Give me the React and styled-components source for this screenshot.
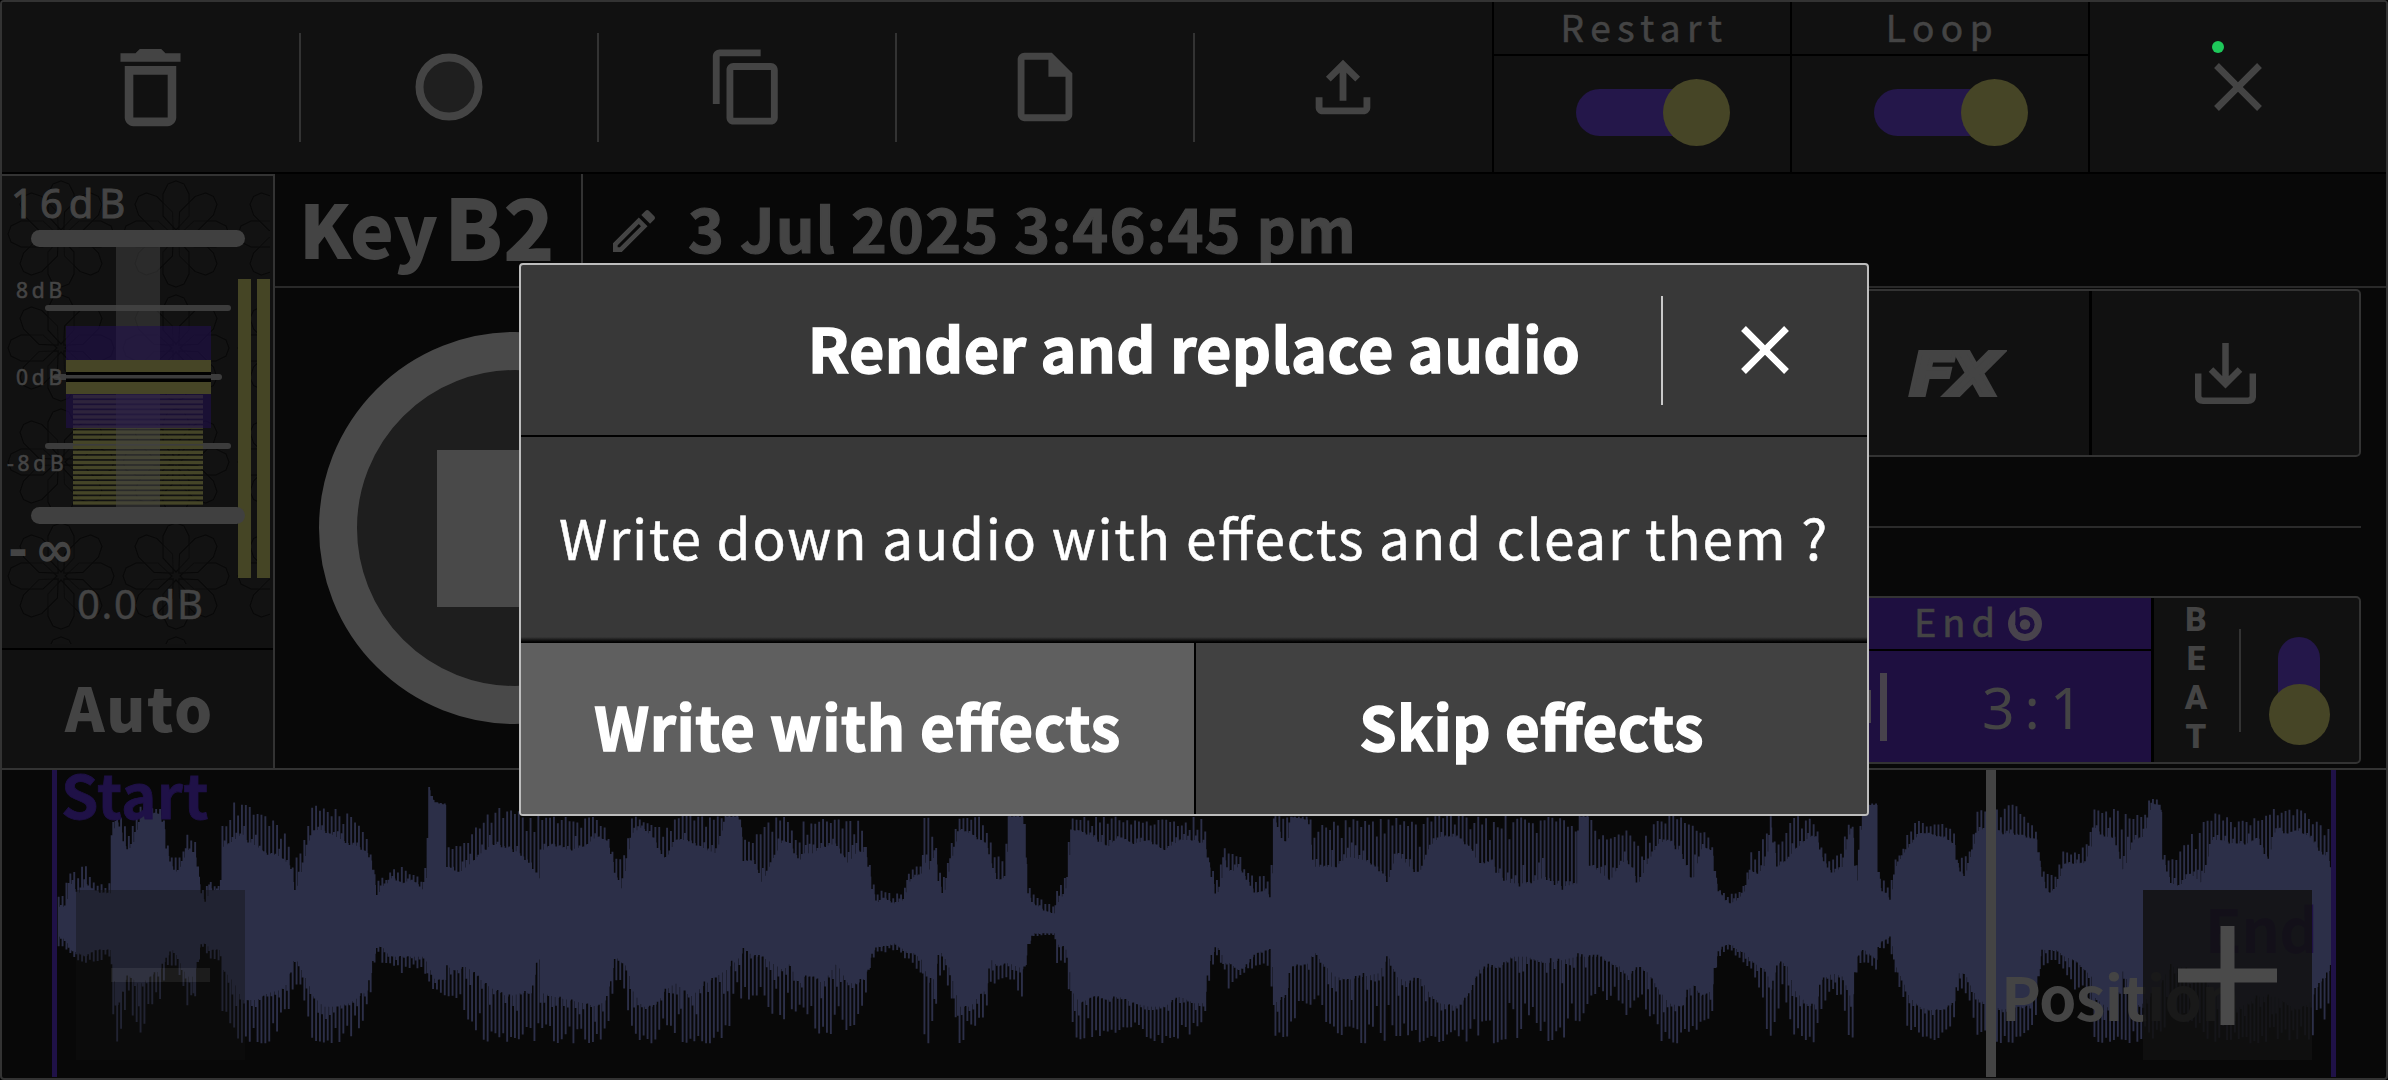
import React from "react";
import styled, { createGlobalStyle } from "styled-components";

const sans = `"Noto Sans CJK SC", "Noto Sans", sans-serif`;
const digits = `"Noto Sans", "Open Sans", sans-serif`;

const c = {
  bg: "#080808",
  panel: "#111111",
  line: "#333333",
  grey: "#444444",
  olive: "#464526",
  violet: "#24174a",
  deep: "#1e0f40",
  wave: "#2c2f48",
};

const GlobalStyle = createGlobalStyle`
  *, *::before, *::after { box-sizing: border-box; }
  body { margin: 0; background: #000; overflow: hidden; }
`;

const Frame = styled.div`
  position: relative;
  display: grid;
  grid-template-rows: 172px 596px 308px;
  width: 2388px;
  height: 1080px;
  border: 2px solid ${c.line};
  border-radius: 4px;
  background: ${c.bg};
  color: ${c.grey};
  font-family: ${sans};
  overflow: hidden;
`;

const Label = styled.span`
  font-family: ${(p) => (p.$digits ? digits : sans)};
  font-size: ${(p) => p.$size}px;
  font-weight: ${(p) => p.$weight || 400};
  letter-spacing: ${(p) => p.$track || 0}px;
  line-height: 1;
  padding-top: ${(p) => p.$drop || 0}px;
  padding-bottom: ${(p) => (p.$digits ? 0.06 : 0.14)}em;
  white-space: nowrap;
  font-feature-settings: "liga" 1;
  -webkit-text-stroke: ${(p) => p.$fat || 0}px currentColor;
`;

/* toolbar */
const Toolbar = styled.header`
  display: flex;
  background: ${c.panel};
  border-bottom: 2px solid #000;
`;

const Tool = styled.button`
  display: flex;
  align-items: center;
  justify-content: center;
  width: 298px;
  padding: 0 ${(p) => p.$inset || 0}px 0 0;
  border: 0;
  background: none;
  color: ${c.grey};
  position: relative;
  ${(p) =>
    p.$divider &&
    `&::after { content: ""; position: absolute; right: -1px; top: 31px; width: 2px; height: 109px; background: ${c.line}; }`}
  ${(p) => p.$edge && `border-left: 2px solid #000;`}
`;

const SwitchCell = styled.div`
  display: grid;
  grid-template-rows: 54px 1fr;
  width: 298px;
  border-left: 2px solid #000;
`;

const SwitchTitle = styled.div`
  display: flex;
  align-items: center;
  justify-content: center;
  padding: 2px 0 0 5px;
  border-bottom: 2px solid #000;
`;

const SwitchBody = styled.div`
  display: flex;
  align-items: center;
  justify-content: center;
  padding: 0 0 3px 22px;
`;

const Track = styled.div`
  display: flex;
  align-items: center;
  justify-content: flex-end;
  width: 154px;
  height: 67px;
  &::before {
    content: "";
    flex: 1;
    height: 47px;
    margin-right: -34px;
    border-radius: 24px 0 0 24px;
    background: ${c.violet};
  }
`;

const Knob = styled.div`
  position: relative;
  width: ${(p) => p.$d}px;
  height: ${(p) => p.$d}px;
  border-radius: 50%;
  background: ${c.olive};
`;

const StatusDot = styled.i`
  position: absolute;
  left: 122px;
  top: 39px;
  width: 12px;
  height: 12px;
  border-radius: 50%;
  background: #1ec85a;
`;

/* middle */
const Middle = styled.main`
  display: grid;
  grid-template-columns: 273px 1fr;
  border-bottom: 2px solid ${c.line};
`;

const Channel = styled.section`
  display: grid;
  grid-template-rows: 474px 1fr;
  border-top: 2px solid ${c.line};
  border-right: 2px solid ${c.line};
  background: ${c.panel};
`;

const Fader = styled.div`
  position: relative;
  border-bottom: 2px solid #000;
`;

const FaderArt = styled.svg`
  display: block;
`;

const Mark = styled(Label)`
  position: absolute;
  left: ${(p) => p.$x}px;
  top: ${(p) => p.$y}px;
`;

const Floor = styled(Mark)`
  font-family: "DejaVu Sans", sans-serif;
  word-spacing: -10px;
`;

const AutoButton = styled.button`
  display: flex;
  align-items: center;
  justify-content: center;
  border: 0;
  padding: 3px 0 0 4px;
  background: ${c.panel};
  color: ${c.grey};
`;

const Deck = styled.section`
  display: grid;
  grid-template-rows: 114px 1fr;
`;

const TitleBar = styled.div`
  display: flex;
  border-bottom: 2px solid #292929;
`;

const KeyName = styled.div`
  display: flex;
  align-items: flex-start;
  width: 308px;
  padding: 7px 0 0 24px;
  gap: 6px;
  border-right: 2px solid ${c.line};
`;

const DateName = styled.div`
  display: flex;
  align-items: center;
  gap: 26px;
  padding: 1px 0 0 23px;
`;

const DeckBody = styled.div`
  display: grid;
  grid-template-columns: 480px 1606px;
`;

const StopArea = styled.div`
  display: flex;
  align-items: center;
  justify-content: center;
`;

const StopButton = styled.button`
  display: flex;
  align-items: center;
  justify-content: center;
  width: 392px;
  height: 392px;
  padding: 0;
  border: 38px solid #494949;
  border-radius: 50%;
  background: #1e1e1e;
  &::before {
    content: "";
    width: 157px;
    height: 157px;
    background: #494949;
  }
`;

const Controls = styled.div`
  display: flex;
  flex-direction: column;
  justify-content: space-between;
  padding: 1px 0 4px;
`;

const Panel = styled.div`
  display: flex;
  height: 168px;
  border: 2px solid ${c.line};
  border-radius: 5px;
  background: ${c.panel};
  overflow: hidden;
`;

const Rule = styled.hr`
  width: 100%;
  height: 2px;
  margin: 0;
  border: 0;
  background: #2b2b2b;
`;

const Pad = styled.div`
  flex: ${(p) => (p.$wide ? "1" : "0 0 267px")};
  display: flex;
  align-items: center;
  justify-content: center;
  border-right: ${(p) => (p.$last ? 0 : 3)}px solid #000;
`;

const FxMark = styled.span`
  font: italic 700 58px/1 "DejaVu Sans", sans-serif;
  letter-spacing: -6px;
  -webkit-text-stroke: 4px currentColor;
  transform: scaleX(1.16);
  padding: 4px 9px 0 0;
`;

const Spacer = styled.div`
  flex: 1;
  background: ${c.deep};
`;

const EndField = styled.div`
  display: grid;
  grid-template-rows: 53px 1fr;
  width: 344px;
  background: ${c.deep};
`;

const EndTitle = styled.div`
  display: flex;
  align-items: center;
  justify-content: center;
  gap: 7px;
  padding-right: 2px;
  border-bottom: 2px solid #000;
`;

const EndValue = styled.div`
  display: flex;
  align-items: center;
  padding: 0 0 0 61px;
`;

const Stick = styled.i`
  width: ${(p) => p.$w}px;
  height: ${(p) => p.$h}px;
  margin-right: ${(p) => p.$gap}px;
  background: #48434c;
`;

const BeatCell = styled.div`
  display: grid;
  grid-template-columns: 85px 2px 1fr;
  align-items: center;
  width: 208px;
  border-left: 3px solid #000;
`;

const BeatWord = styled.div`
  display: flex;
  flex-direction: column;
  align-items: center;
  padding: 0 1px 4px 0;
  font: 900 33px/39px Roboto, sans-serif;
`;

const BeatRule = styled.i`
  height: 103px;
  background: ${c.line};
`;

const BeatSwitch = styled.div`
  display: flex;
  flex-direction: column;
  align-items: center;
  padding: 22px 2px 0 0;
  &::before {
    content: "";
    width: 42px;
    height: 76px;
    margin-bottom: -29px;
    border-radius: 21px 21px 0 0;
    background: ${c.violet};
  }
`;

/* waveform */
const WaveArea = styled.section`
  position: relative;
`;

const WaveArt = styled.svg`
  display: block;
`;

const Marker = styled.i`
  position: absolute;
  top: 0;
  bottom: 1px;
  left: ${(p) => p.$x}px;
  width: ${(p) => p.$w}px;
  background: ${(p) => p.$color};
`;

const MarkerName = styled(Label)`
  position: absolute;
  left: ${(p) => p.$x}px;
  top: ${(p) => p.$y}px;
  color: ${(p) => p.$color};
`;

const ZoomButton = styled.button`
  position: absolute;
  top: 120px;
  left: ${(p) => p.$x}px;
  width: 169px;
  height: 170px;
  padding: 0;
  border: 0;
  display: flex;
  align-items: center;
  justify-content: center;
  background: rgba(17, 17, 17, ${(p) => p.$alpha});
`;

/* dialog */
const Dialog = styled.div`
  position: absolute;
  left: 517px;
  top: 261px;
  width: 1350px;
  height: 553px;
  display: grid;
  grid-template-rows: 172px 206px 1fr;
  border: 2px solid #bdbdbd;
  border-radius: 4px;
  background: #383838;
  color: #fff;
  overflow: hidden;
`;

const DialogHead = styled.div`
  display: grid;
  grid-template-columns: 206px 1fr 206px;
  align-items: center;
  border-bottom: 2px solid #000;
`;

const DialogTitle = styled.div`
  grid-column: 2;
  display: flex;
  justify-content: center;
  padding-top: 2px;
`;

const DialogClose = styled.button`
  display: flex;
  align-items: center;
  justify-content: center;
  height: 109px;
  padding: 0;
  border: 0;
  border-left: 2px solid #c9c9c9;
  background: none;
  color: #fff;
`;

const DialogText = styled.div`
  display: flex;
  align-items: center;
  justify-content: center;
  background: linear-gradient(#383838 0 200px, #000 205px);
`;

const DialogActions = styled.div`
  display: grid;
  grid-template-columns: 1fr 1fr;
`;

const Action = styled.button`
  display: flex;
  align-items: center;
  justify-content: center;
  padding: 1px 0 0;
  border: 0;
  border-left: ${(p) => (p.$primary ? 0 : 2)}px solid #000;
  background: ${(p) => (p.$primary ? "#5f5f5f" : "#414141")};
  color: #fff;
`;

const Icon = ({ d, size = 82 }) => (
  <svg width={size} height={size} viewBox="0 0 24 24" fill="currentColor">
    <path d={d} />
  </svg>
);

const icons = {
  trash: "M6 19c0 1.1.9 2 2 2h8c1.1 0 2-.9 2-2V7H6v12zM8 9h8v10H8V9zm7.5-5l-1-1h-5l-1 1H5v2h14V4h-3.5z",
  copy: "M16 1H4c-1.1 0-2 .9-2 2v14h2V3h12V1zm3 4H8c-1.1 0-2 .9-2 2v14c0 1.1.9 2 2 2h11c1.1 0 2-.9 2-2V7c0-1.1-.9-2-2-2zm0 16H8V7h11v14z",
  file: "M14 2H6c-1.1 0-2 .9-2 2v16c0 1.1.9 2 2 2h12c1.1 0 2-.9 2-2V8l-6-6zM6 20V4h7v5h5v11H6z",
  upload: "M18 15v3H6v-3H4v3c0 1.1.9 2 2 2h12c1.1 0 2-.9 2-2v-3h-2zM7 9l1.41 1.41L11 7.83V16h2V7.83l2.59 2.58L17 9l-5-5-5 5z",
  close: "M19 6.41L17.59 5 12 10.59 6.41 5 5 6.41 10.59 12 5 17.59 6.41 19 12 13.41 17.59 19 19 17.59 13.41 12z",
  pencil: "M14.06 9.02l.92.92L5.92 19H5v-.92l9.06-9.06M17.66 3c-.25 0-.51.1-.7.29l-1.83 1.83 3.75 3.75 1.83-1.83c.39-.39.39-1.02 0-1.41l-2.34-2.34c-.2-.2-.45-.29-.71-.29zm-3.6 3.19L3 17.25V21h3.75L17.81 9.94l-3.75-3.75z",
};

/* Envelope samples per segment: x, outer top, inner top, inner bottom, outer bottom */
const segments = [
  [0, `113,440,470,560,590 125,420,470,570,600 135,350,400,600,610 150,360,430,610,630 165,340,400,620,640 180,390,420,600,640 200,400,430,600,630 214,400,430,600,620 217,240,250,640,780 225,170,210,780,880 232,190,230,740,870 245,235,300,680,770 255,220,290,680,780 262,210,260,700,830 275,150,190,700,870 290,180,190,680,770 310,160,190,660,760 318,180,220,640,700 325,270,310,620,660 335,300,350,600,650 345,330,370,620,650 355,310,330,660,700 365,250,300,680,780 378,250,310,680,800 384,310,340,620,700 390,410,430,580,600 400,420,460,580,590 408,390,410,600,640 415,400,420,600,620 430,410,420,600,650 434,200,290,660,830 445,240,280,680,780 455,150,270,700,880 470,160,250,750,880 480,165,270,750,880 500,180,290,750,880 520,200,310,730,880 545,220,320,720,860 560,250,340,700,800 567,320,350,650,760 575,320,430,620,700 590,290,350,670,730 600,240,280,700,780 610,170,240,740,880 630,160,240,770,880 655,175,260,770,880 680,190,280,760,870 700,210,290,740,840 718,270,310,720,790 727,320,340,650,710 735,400,440,590,600 745,380,410,590,650 755,390,400,610,640 765,360,380,620,640 785,350,400,620,670 800,370,390,620,660 815,370,400,620,660 825,390,420,620,650 834,340,370,640,710 839,110,120,660,700 848,155,155,690,720 870,160,165,690,740 874,270,350,650,740 885,280,350,660,740 895,290,370,660,750 910,270,350,650,790 925,230,330,670,840 945,200,300,700,870 965,165,280,720,880 990,180,290,740,880 1015,180,310,730,880 1040,190,340,730,880 1052,190,400,610,880 1060,195,300,730,880 1080,200,280,740,880 1110,200,300,750,880 1140,200,290,760,880 1165,200,260,770,880 1185,230,270,750,860 1195,290,310,680,780 1203,320,370,620,690 1215,320,420,640,700 1225,290,330,650,750 1235,200,250,720,840 1255,195,230,770,880 1280,210,270,770,880 1300,240,330,720,840 1320,200,270,700,880 1350,190,270,740,880 1380,200,300,700,880 1400,200,310,680,880 1420,190,200,660,870 1447,195,200,620,780 1455,260,330,600,760 1475,260,330,620,740 1490,240,400,620,750 1510,200,330,640,790 1530,190,270,660,810 1545,220,280,640,820 1555,260,310,690,790 1566,250,330,700,770`],
  [800, `0,200,310,680,780 20,200,310,680,820 40,200,290,700,860 68,200,280,640,860 90,200,340,700,850 110,200,300,700,820 125,240,310,680,780 131,300,340,640,720 138,370,410,610,650 148,430,460,590,610 160,420,440,590,610 180,430,460,580,600 200,430,450,600,620 208,370,400,610,630 220,350,380,610,640 235,340,370,630,680 239,195,330,650,880 250,200,360,700,880 262,240,300,680,860 268,350,390,600,700 278,390,435,620,650 290,310,350,660,720 300,250,290,720,800 310,200,240,770,880 330,200,250,770,860 350,200,270,730,820 362,240,280,720,790 372,270,340,630,700 385,310,390,650,710 400,340,380,640,700 406,195,200,640,680 437,195,200,660,750 443,400,430,590,600 455,430,460,550,560 475,450,480,550,555 495,470,490,550,555 503,410,450,590,660 515,400,430,590,640 522,320,380,620,660 528,195,240,720,850 545,200,240,760,880 570,200,260,740,870 600,200,290,750,850 620,200,260,740,860 650,205,280,760,830 680,215,270,770,870 710,205,300,770,880 740,210,270,740,870 770,200,270,760,850 790,205,280,760,810 798,320,340,640,720 812,380,430,590,620 820,370,420,600,640 828,290,320,640,660 840,300,370,640,740 855,290,350,660,680 870,360,380,650,670 890,380,430,610,650 910,370,420,600,640 921,400,450,600,660 925,195,200,760,880 950,200,290,740,880 960,200,200,650,820 995,200,210,640,760 1002,210,350,600,770 1020,215,350,640,800 1045,215,350,680,850 1070,210,320,690,880 1100,205,330,680,880 1130,210,350,670,880 1150,200,390,620,880 1165,200,310,680,880 1190,205,350,700,860 1210,210,370,680,880 1230,200,290,730,870 1250,195,260,760,880 1285,195,260,770,860 1310,200,290,730,880 1325,200,340,660,880 1350,195,330,650,880 1370,200,380,650,880 1390,195,400,620,880 1420,200,400,620,860 1440,205,390,630,840 1460,200,380,640,880 1490,200,410,630,860 1520,195,400,620,880 1524,195,200,620,830 1543,195,200,620,770`],
  [1588, `0,200,340,620,750 20,230,370,620,750 40,240,390,640,750 60,250,340,650,760 75,240,330,680,800 95,290,400,650,740 115,250,330,670,800 135,200,280,720,870 155,195,270,760,880 180,195,310,770,880 200,200,400,700,880 220,220,290,740,840 240,270,300,720,810 250,390,410,610,640 262,420,450,590,610 275,430,460,580,600 290,430,450,600,620 305,400,420,610,640 315,300,360,630,660 330,320,370,650,700 345,240,340,660,830 356,195,230,720,890 368,290,350,640,780 385,250,330,640,760 400,200,300,720,860 430,195,260,770,880 445,220,260,760,880 455,290,320,690,780 475,320,370,670,730 495,310,350,680,740 505,230,270,720,820 515,195,230,760,915 524,350,400,620,680 534,195,200,600,640 538,160,165,600,640 563,160,165,630,660 568,380,410,580,600 590,400,450,560,590 600,330,350,650,680 615,300,310,700,740 625,240,290,740,840 645,210,250,770,870 665,210,250,780,880 690,220,260,780,860 715,240,280,760,820 722,330,350,670,730 735,320,380,670,730 750,280,300,720,780 762,170,240,750,880 790,170,230,770,880 810,170,250,780,880 835,160,250,770,880 860,200,260,770,860 878,250,270,700,790 885,350,370,600,650 900,370,430,600,640 915,380,410,600,630 930,300,340,620,660 950,310,340,630,720 970,290,340,660,740 983,240,290,680,820 988,160,230,740,880 1010,160,260,770,880 1030,165,260,780,880 1046,180,370,650,880 1065,190,270,770,880 1085,200,260,760,880 1093,190,220,740,870 1100,125,160,740,870 1120,160,165,700,870 1125,310,330,680,860 1140,330,400,650,830 1155,300,410,650,800 1175,260,370,660,820 1200,220,400,680,860 1220,200,270,720,880 1240,170,270,760,880 1260,210,280,780,880 1290,210,280,760,880 1310,200,260,740,880 1330,190,330,740,880 1345,170,230,740,870 1365,180,250,760,880 1385,165,240,780,880 1410,190,260,760,870 1430,220,300,700,840 1445,240,320,680,830 1455,210,350,640,820`],
];

const samples = segments.flatMap(([x0, text]) =>
  text.split(" ").map((s) => {
    const [x, ...ys] = s.split(",").map(Number);
    return [x0 + x / 1.96, ...ys.map((y) => y / 3 - 20)];
  })
);

function buildWave() {
  let seed = 7;
  const rnd = () => ((seed = (seed * 16807) % 2147483647) / 2147483647);
  let k = 0;
  let d = "";
  let col = 0;
  for (let x = samples[0][0]; x < 2331; x += col % 2 ? 1.6 : 2.3, col++) {
    while (k < samples.length - 2 && samples[k + 1][0] <= x) k++;
    const a = samples[k];
    const b = samples[k + 1];
    const t = Math.min(1, Math.max(0, (x - a[0]) / (b[0] - a[0] || 1)));
    const [ot, it, ib, ob] = [1, 2, 3, 4].map((i) => a[i] + (b[i] - a[i]) * t);
    const spike = col % 2 === 0;
    const reach = spike ? 1 - rnd() * rnd() * 0.6 : rnd() * rnd() * 0.5 - 0.05;
    const reachB = spike ? 1 - rnd() * rnd() * 0.6 : rnd() * rnd() * 0.5 - 0.05;
    const top = it + (ot - it) * reach;
    const bottom = ib + (ob - ib) * reachB;
    const w = spike ? 1.9 : 2.5;
    d += `M${x.toFixed(1)} ${top.toFixed(1)}h${w}V${bottom.toFixed(1)}h-${w}z`;
    if (spike) d += `M${x.toFixed(1)} ${it.toFixed(1)}h2.4V${ib.toFixed(1)}h-2.4z`;
  }
  return d;
}

const wavePath = buildWave();

const Petals = () => (
  <pattern id="rosette" x="2" y="1" width="115" height="114" patternUnits="userSpaceOnUse">
    {[0, 45, 90, 135, 180, 225, 270, 315].map((r) => (
      <path
        key={r}
        d="M4 0L18 -13H40L50 -8L53 0L50 8L40 13H18Z"
        transform={`translate(57 57) rotate(${r})`}
        fill="#131313"
        fillOpacity="0.3"
        stroke="#080808"
        strokeWidth="1.2"
      />
    ))}
  </pattern>
);

const stripes = Array.from({ length: 22 }, (_, i) => 219 + i * 5.06);

const FaderDrawing = () => (
  <FaderArt width="271" height="472" viewBox="0 0 271 472">
    <defs>
      <Petals />
    </defs>
    <rect x="4" y="2" width="264" height="466" fill="url(#rosette)" />
    <rect x="29" y="54" width="214" height="17" rx="8.5" fill="#404040" />
    <rect x="43" y="129" width="186" height="6" rx="3" fill="#3c3c3c" />
    <rect x="51" y="198" width="169" height="6" rx="3" fill="#3c3c3c" />
    <rect x="43" y="267" width="186" height="6" rx="3" fill="#3c3c3c" />
    {stripes.map((y) => (
      <rect key={y} x="71" y={y} width="130" height="3.4" fill="#454527" />
    ))}
    <rect x="114" y="71" width="44" height="260" fill="#444" fillOpacity="0.5" />
    <rect x="64" y="150" width="145" height="102" fill="#20104a" fillOpacity="0.62" />
    <rect x="64" y="184" width="145" height="34" fill="#464526" />
    <rect x="64" y="196" width="145" height="10" fill="#000" />
    <rect x="64" y="199" width="145" height="3.5" fill="#3c3c3c" />
    <rect x="236" y="103" width="13" height="299" fill="#454525" />
    <rect x="255" y="103" width="13" height="299" fill="#454525" />
    <rect x="29" y="331" width="214" height="17" rx="8.5" fill="#404040" />
  </FaderArt>
);

const BeatsIcon = () => (
  <svg width="34" height="34" viewBox="0 0 34 34">
    <circle cx="17" cy="17" r="17" fill="#48434c" />
    <circle cx="17" cy="17.5" r="9.6" fill={c.deep} />
    <rect x="7.4" y="0" width="4.2" height="18" fill={c.deep} />
    <circle cx="17" cy="17.5" r="5.2" fill="#48434c" />
  </svg>
);

const Toggle = ({ name }) => (
  <SwitchCell>
    <SwitchTitle>
      <Label $size={37} $track={6.5} $fat={0.6}>{name}</Label>
    </SwitchTitle>
    <SwitchBody>
      <Track>
        <Knob $d={67} />
      </Track>
    </SwitchBody>
  </SwitchCell>
);

export default function App() {
  return (
    <>
      <GlobalStyle />
      <Frame>
        <Toolbar>
          <Tool $divider $inset={2}><Icon d={icons.trash} size={103} /></Tool>
          <Tool $divider $inset={1}>
            <svg width="68" height="68" viewBox="0 0 68 68">
              <circle cx="34" cy="34" r="29.5" fill="#1f1f1f" stroke={c.grey} strokeWidth="8" />
            </svg>
          </Tool>
          <Tool $divider><Icon d={icons.copy} /></Tool>
          <Tool $divider><Icon d={icons.file} /></Tool>
          <Tool><Icon d={icons.upload} /></Tool>
          <Toggle name="Restart" />
          <Toggle name="Loop" />
          <Tool $edge $inset={1}>
            <Icon d={icons.close} />
            <StatusDot />
          </Tool>
        </Toolbar>

        <Middle>
          <Channel>
            <Fader>
              <FaderDrawing />
              <Mark $digits $size={40} $track={6} $fat={1} $x={9} $y={7}>16dB</Mark>
              <Mark $digits $size={21} $track={3.8} $fat={0.6} $x={14} $y={104}>8dB</Mark>
              <Mark $digits $size={21} $track={3.8} $fat={0.6} $x={14} $y={191}>0dB</Mark>
              <Mark $digits $size={21} $track={3.8} $fat={0.6} $x={5} $y={277}>-8dB</Mark>
              <Floor $size={48} $weight={700} $x={6} $y={349}>- ∞</Floor>
              <Mark $digits $size={40} $track={1.7} $fat={0.5} $x={75} $y={408}>0.0 dB</Mark>
            </Fader>
            <AutoButton>
              <Label $size={60} $weight={900} $track={1.6}>Auto</Label>
            </AutoButton>
          </Channel>

          <Deck>
            <TitleBar>
              <KeyName>
                <Label $size={74} $weight={900} $drop={9}>Key</Label>
                <Label $size={85} $weight={900}>B2</Label>
              </KeyName>
              <DateName>
                <Icon d={icons.pencil} size={56} />
                <Label $size={61} $weight={700} $track={1.1} $fat={1.2}>3 Jul 2025 3:46:45 pm</Label>
              </DateName>
            </TitleBar>
            <DeckBody>
              <StopArea>
                <StopButton aria-label="Stop" />
              </StopArea>
              <Controls>
                <Panel>
                  <Pad $wide />
                  <Pad><FxMark>FX</FxMark></Pad>
                  <Pad $last>
                    <svg width="61" height="61" viewBox="0 0 61 61" fill="none" stroke={c.grey} strokeWidth="6.5">
                      <path d="M3.2 30.5V53Q3.2 57.7 8 57.7H53Q57.8 57.7 57.8 53V30.5M30.5 0V41M16 26.5L30.5 41L45 26.5" />
                    </svg>
                  </Pad>
                </Panel>
                <Rule />
                <Panel>
                  <Spacer />
                  <EndField>
                    <EndTitle>
                      <Label $size={38} $track={6} $fat={0.7}>End</Label>
                      <BeatsIcon />
                    </EndTitle>
                    <EndValue>
                      <Stick $w={3} $h={33} $gap={9} />
                      <Stick $w={7} $h={68} $gap={95} />
                      <Label $digits $size={57} $weight={400} $track={10} $drop={5}>3:1</Label>
                    </EndValue>
                  </EndField>
                  <BeatCell>
                    <BeatWord>
                      <span>B</span>
                      <span>E</span>
                      <span>A</span>
                      <span>T</span>
                    </BeatWord>
                    <BeatRule />
                    <BeatSwitch>
                      <Knob $d={61} />
                    </BeatSwitch>
                  </BeatCell>
                </Panel>
              </Controls>
            </DeckBody>
          </Deck>
        </Middle>

        <WaveArea>
          <WaveArt width="2384" height="308" viewBox="2 0 2384 308" fill={c.wave}>
            <path d={wavePath} />
          </WaveArt>
          <Marker $x={50} $w={5} $color="#1f1147" />
          <MarkerName $size={60} $weight={700} $fat={0.8} $track={0.3} $x={59} $y={-7} $color="#1f1147">Start</MarkerName>
          <Marker $x={2329} $w={5} $color="#1f1147" />
          <MarkerName $size={60} $weight={700} $track={-0.5} $x={2203} $y={127} $color="#1f1147">End</MarkerName>
          <Marker $x={1984} $w={10} $color={c.grey} />
          <MarkerName $size={60} $weight={700} $track={-0.6} $x={1999} $y={195} $color={c.grey}>Position</MarkerName>
          <ZoomButton $x={74} $alpha={0.4} aria-label="Zoom out">
            <svg width="99" height="99" viewBox="0 0 99 99">
              <path d="M0 42H99V56H0z" fill="#fff" fillOpacity="0.07" />
            </svg>
          </ZoomButton>
          <ZoomButton $x={2141} $alpha={0.84} aria-label="Zoom in">
            <svg width="99" height="99" viewBox="0 0 99 99">
              <path d="M0 42.5H42.5V0H56.5V42.5H99V56.5H56.5V99H42.5V56.5H0z" fill="#4a4a4a" />
            </svg>
          </ZoomButton>
        </WaveArea>

        <Dialog role="dialog">
          <DialogHead>
            <DialogTitle>
              <Label $size={61} $weight={700} $track={0.3} $fat={1.4}>Render and replace audio</Label>
            </DialogTitle>
            <DialogClose aria-label="Close">
              <Icon d={icons.close} />
            </DialogClose>
          </DialogHead>
          <DialogText>
            <Label $size={55} $track={1.7} $fat={0.5}>Write down audio with effects and clear them ?</Label>
          </DialogText>
          <DialogActions>
            <Action $primary>
              <Label $size={60} $weight={700} $track={0.6} $fat={1.4}>Write with effects</Label>
            </Action>
            <Action>
              <Label $size={60} $weight={700} $track={0.3} $fat={1.4}>Skip effects</Label>
            </Action>
          </DialogActions>
        </Dialog>
      </Frame>
    </>
  );
}
